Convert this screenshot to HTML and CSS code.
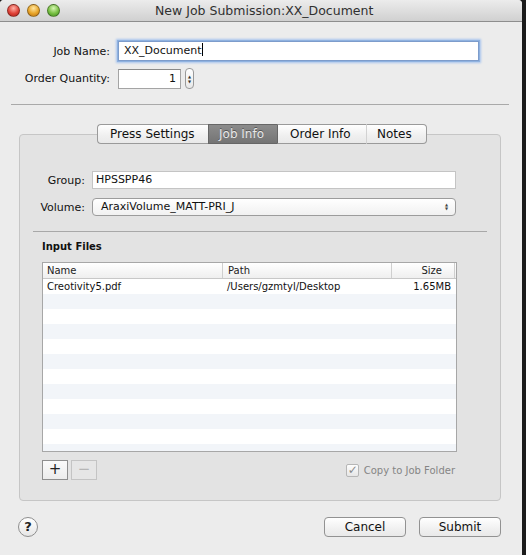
FILE: index.html
```html
<!DOCTYPE html>
<html lang="en">
<head>
  <meta charset="UTF-8">
  <title>New Job Submission</title>
  <link rel="stylesheet" href="styles.css">
</head>
<body>
  <div class="window">
    <div class="titlebar">
      <div class="lights">
        <span class="light red"></span>
        <span class="light yellow"></span>
        <span class="light green"></span>
      </div>
      <div class="title">New Job Submission:XX_Document</div>
    </div>

    <div class="job-form">
      <div class="label">Job Name:</div>
      <div class="field focus">XX_Document<span class="caret"></span></div>
      <div class="label">Order Quantity:</div>
      <div class="qty-row">
        <div class="field qty">1</div>
        <div class="stepper"><span>&#9650;</span><span>&#9660;</span></div>
      </div>
    </div>

    <div class="rule"></div>

    <div class="tabview">
      <div class="tabs">
        <div class="tab">Press Settings</div>
        <div class="tab selected">Job Info</div>
        <div class="tab">Order Info</div>
        <div class="tab last">Notes</div>
      </div>

      <div class="tabbox">
        <div class="group-form">
          <div class="label">Group:</div>
          <div class="field small">HPSSPP46</div>
          <div class="label">Volume:</div>
          <div class="popup">AraxiVolume_MATT-PRI_J<span class="arrows">&#9650;<br>&#9660;</span></div>
        </div>

        <div class="rule inner"></div>

        <div class="files">
          <div class="section-title">Input Files</div>
          <div class="table">
            <div class="row head">
              <div class="c-name">Name</div>
              <div class="c-path">Path</div>
              <div class="c-size">Size</div>
            </div>
            <div class="row">
              <div class="c-name">Creotivity5.pdf</div>
              <div class="c-path">/Users/gzmtyl/Desktop</div>
              <div class="c-size">1.65MB</div>
            </div>
            <div class="row"></div>
            <div class="row"></div>
            <div class="row"></div>
            <div class="row"></div>
            <div class="row"></div>
            <div class="row"></div>
            <div class="row"></div>
            <div class="row"></div>
            <div class="row"></div>
            <div class="row"></div>
            <div class="row"></div>
          </div>
          <div class="table-actions">
            <div class="sq-btn">+</div>
            <div class="sq-btn disabled">&minus;</div>
            <div class="check">
              <span class="box">&#10003;</span>
              Copy to Job Folder
            </div>
          </div>
        </div>
      </div>
    </div>

    <div class="footer">
      <div class="help">?</div>
      <div class="btn">Cancel</div>
      <div class="btn">Submit</div>
    </div>
  </div>
</body>
</html>
```

FILE: styles.css
```css
body {
  margin: 0;
  padding: 0;
  background: #1b1b1b;
  font-family: "DejaVu Sans", sans-serif;
  color: #111;
}

.window {
  width: 522px;
  height: 555px;
  background: #ececec;
  border-radius: 4px 4px 0 0;
  overflow: hidden;
}

.titlebar {
  height: 21px;
  border-bottom: 1px solid #8e8e8e;
  background: linear-gradient(#ececec, #d0d0d0);
  display: flex;
  align-items: center;
}

.lights {
  display: flex;
  gap: 7px;
  padding-left: 7px;
  width: 145px;
}

.light {
  width: 13px;
  height: 13px;
  border-radius: 50%;
  border: 1px solid rgba(0, 0, 0, 0.35);
  box-sizing: border-box;
}
.red { background: radial-gradient(circle at 50% 30%, #ffb3a8, #e0443a 55%, #a81f17); }
.yellow { background: radial-gradient(circle at 50% 30%, #ffe6a0, #e8a529 55%, #b56d10); }
.green { background: radial-gradient(circle at 50% 30%, #d6f5b3, #78c043 55%, #3f8a1f); }

.title {
  font-size: 12.5px;
  color: #303030;
  padding-left: 3px;
}

.job-form {
  display: grid;
  grid-template-columns: 110px 361px;
  column-gap: 8px;
  row-gap: 7px;
  padding-top: 19px;
  align-items: center;
  font-size: 11px;
}

.label {
  text-align: right;
}

.field {
  height: 20px;
  box-sizing: border-box;
  background: #fff;
  border: 1px solid #a4a4a4;
  border-top-color: #8a8a8a;
  padding: 0 5px;
  line-height: 18px;
  font-size: 11px;
}

.field.focus {
  box-shadow: 0 0 0 1px #8fb2e0, 0 0 2px 2px #a9c5ee;
  border-color: #7d9ccb;
}

.caret {
  display: inline-block;
  width: 1px;
  height: 13px;
  background: #000;
  vertical-align: -2px;
}

.qty-row {
  display: flex;
  align-items: center;
  gap: 4px;
}

.field.qty {
  width: 63px;
  text-align: right;
  padding-right: 4px;
}

.stepper {
  width: 9px;
  height: 21px;
  box-sizing: border-box;
  border: 1px solid #9a9a9a;
  border-radius: 4px;
  background: linear-gradient(#ffffff, #e8e8e8);
  display: flex;
  flex-direction: column;
  align-items: center;
  justify-content: center;
  font-size: 4px;
  line-height: 5px;
  color: #333;
}

.rule {
  height: 1px;
  background: #a9a9a9;
  margin: 15px 13px 0 11px;
}

.tabview {
  margin: 19px 21px 0 19px;
}

.tabs {
  display: flex;
  margin-left: 78px;
  height: 20px;
  position: relative;
  z-index: 1;
}

.tab {
  height: 20px;
  box-sizing: border-box;
  border: 1px solid #9a9a9a;
  border-right: none;
  background: linear-gradient(#ffffff, #efefef 60%, #e9e9e9);
  font-size: 12px;
  line-height: 18px;
  padding: 0 12px;
  color: #111;
}
.tab:first-child {
  border-radius: 4px 0 0 4px;
  width: 111px;
}
.tab.last {
  border-right: 1px solid #9a9a9a;
  border-radius: 0 4px 4px 0;
  width: 61px;
  padding: 0 10px;
}
.tab + .tab:not(.selected) {
  border-left-color: #d2d2d2;
}
.tab.selected {
  width: 69px;
  background: linear-gradient(#8c8c8c, #747474);
  border-color: #666;
  color: #e8e8e8;
  padding: 0 10px;
  text-shadow: 0 -1px 0 #555;
}
.tab.selected + .tab {
  border-left-color: #666;
  width: 89px;
}

.tabbox {
  margin-top: -10px;
  height: 367px;
  box-sizing: border-box;
  border: 1px solid #c6c6c6;
  border-radius: 4px;
  background: #e3e3e3;
  padding-top: 36px;
}

.group-form {
  display: grid;
  grid-template-columns: 53px 364px;
  column-gap: 7px;
  row-gap: 9px;
  padding-left: 12px;
  align-items: center;
  font-size: 11px;
}

.field.small {
  height: 18px;
  line-height: 16px;
  border: 1px solid #c4c4c4;
  padding: 0 3px;
}

.popup {
  height: 18px;
  box-sizing: border-box;
  border: 1px solid #9c9c9c;
  border-radius: 4px;
  background: linear-gradient(#ffffff, #f1f1f1);
  line-height: 16px;
  padding: 0 8px;
  font-size: 11px;
  position: relative;
}

.arrows {
  position: absolute;
  right: 7px;
  top: 4px;
  font-size: 4px;
  line-height: 4px;
  color: #444;
}

.rule.inner {
  margin: 15px 13px 0 13px;
  background: #a8a8a8;
}

.files {
  padding-left: 22px;
}

.section-title {
  font-size: 10px;
  font-weight: bold;
  margin-top: 8px;
  height: 14px;
  line-height: 14px;
}

.table {
  margin-top: 8px;
  width: 415px;
  height: 190px;
  box-sizing: border-box;
  border: 1px solid #a7a7a7;
  background: #fff;
  overflow: hidden;
  font-size: 10px;
}

.row {
  display: flex;
  height: 15px;
  line-height: 15px;
}
.row:nth-child(odd) {
  background: #f2f5f9;
}
.row.head {
  height: 15px;
  background: linear-gradient(#ffffff, #efefef);
  border-bottom: 1px solid #c8c8c8;
  color: #222;
}

.c-name {
  width: 179px;
  padding-left: 4px;
  box-sizing: border-box;
}
.c-path {
  width: 169px;
  padding-left: 5px;
  box-sizing: border-box;
}
.c-size {
  width: 64px;
  padding-right: 4px;
  box-sizing: border-box;
  text-align: right;
}
.head .c-path, .head .c-size {
  border-left: 1px solid #cfcfcf;
}
.head .c-size {
  border-right: 1px solid #cfcfcf;
  padding-right: 12px;
}

.table-actions {
  display: flex;
  align-items: center;
  margin-top: 8px;
  width: 415px;
  height: 20px;
}

.sq-btn {
  width: 26px;
  height: 20px;
  box-sizing: border-box;
  border: 1px solid #8e8e8e;
  background: linear-gradient(#fafafa, #ececec);
  text-align: center;
  line-height: 17px;
  font-size: 15px;
  color: #222;
  margin-right: 3px;
}
.sq-btn.disabled {
  border-color: #c4c4c4;
  color: #b5b5b5;
  background: #e6e6e6;
}

.check {
  margin-left: auto;
  margin-right: 2px;
  font-size: 10px;
  color: #858585;
  display: flex;
  align-items: center;
  gap: 5px;
}

.box {
  width: 13px;
  height: 13px;
  box-sizing: border-box;
  border: 1px solid #b6b6b6;
  border-radius: 2px;
  background: linear-gradient(#fdfdfd, #e6e6e6);
  font-size: 12px;
  line-height: 10px;
  color: #8a8a8a;
  text-indent: 1px;
}

.footer {
  display: flex;
  align-items: center;
  margin-top: 16px;
  padding: 0 21px 0 18px;
}

.help {
  width: 20px;
  height: 20px;
  box-sizing: border-box;
  border: 1px solid #8e8e8e;
  border-radius: 50%;
  background: linear-gradient(#ffffff, #e6e6e6);
  text-align: center;
  line-height: 18px;
  font-size: 13px;
  font-weight: bold;
  color: #222;
}

.btn {
  height: 20px;
  box-sizing: border-box;
  border: 1px solid #929292;
  border-radius: 4px;
  background: linear-gradient(#ffffff, #f0f0f0 60%, #e9e9e9);
  font-size: 12px;
  line-height: 18px;
  text-align: center;
  width: 82px;
  margin-left: 13px;
}
.help + .btn {
  margin-left: auto;
}
```
